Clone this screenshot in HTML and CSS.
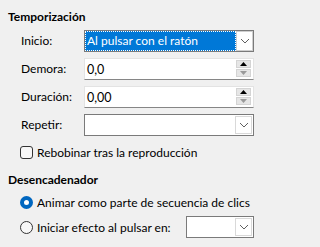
FILE: index.html
```html
<!DOCTYPE html>
<html lang="es">
<head>
<meta charset="utf-8">
<link rel="stylesheet" href="styles.css">
</head>
<body>
<div class="panel">
  <div class="title">Temporización</div>
  <div class="grid">
    <div class="label">Inicio:</div>
    <div class="combo focus">
      <div class="combo-val"><span class="sel">Al pulsar con el ratón</span></div>
      <div class="combo-btn"><svg width="10" height="6" viewBox="0 0 10 6"><path d="M1 1 L5 5 L9 1" fill="none" stroke="#606060" stroke-width="1"/></svg></div>
    </div>
    <div class="label">Demora:</div>
    <div class="field">
      <span class="fval">0,0</span>
      <div class="spin"><div class="up"><svg width="7" height="4" viewBox="0 0 7 4"><path d="M0 4 L3.5 0 L7 4Z" fill="#000"/></svg></div><div class="down"><svg width="7" height="4" viewBox="0 0 7 4"><path d="M0 0 L3.5 4 L7 0Z" fill="#9a9a9a"/></svg></div></div>
    </div>
    <div class="label">Duración:</div>
    <div class="field">
      <span class="fval">0,00</span>
      <div class="spin"><div class="up"><svg width="7" height="4" viewBox="0 0 7 4"><path d="M0 4 L3.5 0 L7 4Z" fill="#000"/></svg></div><div class="down"><svg width="7" height="4" viewBox="0 0 7 4"><path d="M0 0 L3.5 4 L7 0Z" fill="#9a9a9a"/></svg></div></div>
    </div>
    <div class="label">Repetir:</div>
    <div class="combo">
      <div class="combo-val"></div>
      <div class="combo-btn"><svg width="10" height="6" viewBox="0 0 10 6"><path d="M1 1 L5 5 L9 1" fill="none" stroke="#606060" stroke-width="1"/></svg></div>
    </div>
  </div>
  <div class="check-row"><span class="checkbox"></span><span>Rebobinar tras la reproducción</span></div>
  <div class="title title2">Desencadenador</div>
  <div class="radio-row r1"><span class="radio on"></span><span>Animar como parte de secuencia de clics</span></div>
  <div class="radio-row r2"><span class="radio"></span><span class="rtext">Iniciar efecto al pulsar en:</span>
    <div class="combo small">
      <div class="combo-val"></div>
      <div class="combo-btn"><svg width="10" height="6" viewBox="0 0 10 6"><path d="M1 1 L5 5 L9 1" fill="none" stroke="#606060" stroke-width="1"/></svg></div>
    </div>
  </div>
</div>
</body>
</html>
```
FILE: styles.css
```css
html, body {
  margin: 0;
  padding: 0;
  background: #f0f0f0;
}
body {
  width: 262px;
  height: 247px;
  overflow: hidden;
  font-family: Lato, "Open Sans", sans-serif;
  font-size: 12px;
  color: #000;
  white-space: nowrap;
}
.panel {
  padding: 9px 8px 0 8px;
}
.title {
  font-weight: bold;
  line-height: 16px;
  height: 16px;
}
.grid {
  margin-top: 5px;
  display: grid;
  grid-template-columns: 63px 170px;
  row-gap: 6px;
  padding-left: 13px;
}
.label {
  height: 22px;
  line-height: 22px;
}
.combo {
  height: 22px;
  box-sizing: border-box;
  border: 1px solid #7a7a7a;
  background: #fff;
  display: flex;
  flex-shrink: 0;
}
.combo-val {
  flex: 1;
  padding: 1px;
  display: flex;
}
.combo.focus .combo-val {
  background: #0078d7;
  padding: 0;
}
.sel {
  flex: 1;
  color: #fff;
  border: 1px dotted #000;
  outline: 1px dotted #fff;
  outline-offset: -1px;
  line-height: 18px;
  padding-left: 1px;
}
.combo-btn {
  width: 17px;
  box-sizing: border-box;
  border: 1px solid #d9d9d9;
  background: #fff;
  display: flex;
  align-items: center;
  justify-content: center;
  margin: 1px;
}
.combo.focus .combo-btn {
  margin: 0;
  border-color: #cfcfcf;
}
.field {
  height: 22px;
  box-sizing: border-box;
  border: 1px solid #e3e3e3;
  border-bottom-color: #868686;
  background: #fff;
  display: flex;
  align-items: center;
}
.fval {
  flex: 1;
  padding-left: 2px;
  font-size: 12.5px;
}
.spin {
  width: 15px;
  height: 17px;
  margin-right: 2px;
  display: flex;
  flex-direction: column;
  gap: 1px;
  align-self: flex-start;
  margin-top: 1px;
}
.spin .up, .spin .down {
  flex: 1;
  box-sizing: border-box;
  background: #e6e6e6;
  border: 1px solid #d4d4d4;
  display: flex;
  align-items: center;
  justify-content: center;
}
.check-row {
  margin-top: 8px;
  padding-left: 12px;
  display: flex;
  align-items: center;
  gap: 4px;
  height: 16px;
}
.checkbox {
  flex-shrink: 0;
  width: 13px;
  height: 13px;
  box-sizing: border-box;
  border: 1px solid #333;
  border-radius: 3px;
  background: #f7f7f7;
}
.title2 {
  margin-top: 12px;
}
.radio-row {
  padding-left: 12px;
  display: flex;
  align-items: center;
  gap: 4px;
}
.r1 {
  margin-top: 6px;
  height: 16px;
}
.r2 {
  margin-top: 6px;
  height: 22px;
}
.radio {
  flex-shrink: 0;
  width: 13px;
  height: 13px;
  box-sizing: border-box;
  border-radius: 50%;
  border: 1px solid #333;
  background: #f7f7f7;
}
.radio.on {
  border: 4px solid #0067c0;
  background: #fff;
}
.rtext {
  width: 145px;
  flex-shrink: 0;
}
.combo.small {
  width: 68px;
}
```
